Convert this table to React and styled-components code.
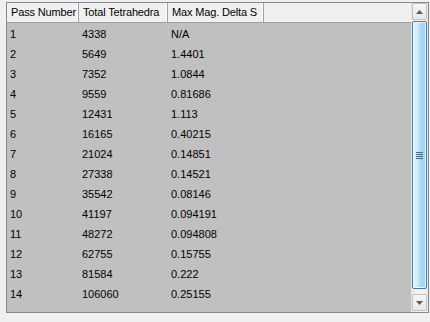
import React from 'react';
import styled, { createGlobalStyle } from 'styled-components';

const GlobalStyle = createGlobalStyle`
  html, body {
    margin: 0;
    padding: 0;
    background: #f0f0f0;
  }
  body {
    font-family: "Liberation Sans", Arial, sans-serif;
    font-size: 11px;
    color: #000;
  }
`;

const Page = styled.div`
  width: 430px;
  height: 322px;
  padding: 2px 1px 0 6px;
  box-sizing: border-box;
  background: #f0f0f0;
`;

const ListBox = styled.div`
  display: flex;
  height: 311px;
  border: 1px solid #828790;
  background: #c0c0c0;
  box-sizing: border-box;
`;

const Body = styled.div`
  flex: 1;
  display: flex;
  flex-direction: column;
  overflow: hidden;
`;

const Header = styled.div`
  display: flex;
  height: 20px;
  flex: none;
  background: #f0f0f0;
  border-bottom: 1px solid #a0a0a0;
  box-sizing: border-box;
`;

const HeaderCell = styled.div`
  width: ${(p) => p.$w}px;
  flex: ${(p) => (p.$fill ? 1 : 'none')};
  padding-left: 4px;
  line-height: 19px;
  letter-spacing: -0.15px;
  white-space: nowrap;
  overflow: hidden;
  border-right: 1px solid #a0a0a0;
  box-shadow: inset -1px 0 0 #fff;
  box-sizing: border-box;
  &:last-child {
    border-right: none;
    box-shadow: none;
  }
`;

const Rows = styled.div`
  display: flex;
  flex-direction: column;
  padding-top: 1px;
`;

const Row = styled.div`
  display: flex;
  height: 20px;
  flex: none;
  align-items: center;
`;

const Cell = styled.div`
  width: ${(p) => p.$w}px;
  padding-left: 3px;
  white-space: nowrap;
  box-sizing: border-box;
`;

const ScrollBar = styled.div`
  width: 17px;
  flex: none;
  display: flex;
  flex-direction: column;
  background: linear-gradient(to right, #e3e3e3, #f3f3f3 30%, #f3f3f3 70%, #e6e6e6);
  padding: 0 0 1px 0;
  box-sizing: border-box;
`;

const ArrowButton = styled.div`
  height: 17px;
  flex: none;
  margin: 0 1px;
  border: 1px solid #c2c2c2;
  border-radius: 2px;
  background: linear-gradient(#f6f6f6, #e8e8e8);
  display: flex;
  align-items: center;
  justify-content: center;
  box-sizing: border-box;
`;

const Track = styled.div`
  flex: 1;
  display: flex;
  flex-direction: column;
  padding: 1px 0 ${(p) => p.$bottom}px;
`;

const Thumb = styled.div`
  flex: 1;
  margin: 0 1px;
  border: 1px solid #3c7fb1;
  border-radius: 2px;
  background: linear-gradient(to right, #e3f4fc, #c6e8f9 45%, #a9d9f2 55%, #a2d5f0);
  box-shadow: inset 0 0 0 1px rgba(255, 255, 255, 0.7);
  display: flex;
  align-items: center;
  justify-content: center;
`;

const Arrow = ({ up }) => (
  <svg width="7" height="4" viewBox="0 0 7 4">
    <path d={up ? 'M0 4 L3.5 0 L7 4 Z' : 'M0 0 L3.5 4 L7 0 Z'} fill="#5a5a5a" />
  </svg>
);

const Grip = () => (
  <svg width="7" height="7" viewBox="0 0 7 7">
    {[0, 2, 4, 6].map((y) => (
      <rect key={y} x="0" y={y} width="7" height="1" fill="#3e6b8a" />
    ))}
  </svg>
);

const columns = [
  { label: 'Pass Number', w: 72 },
  { label: 'Total Tetrahedra', w: 89 },
  { label: 'Max Mag. Delta S', w: 96 },
];

const rows = [
  ['1', '4338', 'N/A'],
  ['2', '5649', '1.4401'],
  ['3', '7352', '1.0844'],
  ['4', '9559', '0.81686'],
  ['5', '12431', '1.113'],
  ['6', '16165', '0.40215'],
  ['7', '21024', '0.14851'],
  ['8', '27338', '0.14521'],
  ['9', '35542', '0.08146'],
  ['10', '41197', '0.094191'],
  ['11', '48272', '0.094808'],
  ['12', '62755', '0.15755'],
  ['13', '81584', '0.222'],
  ['14', '106060', '0.25155'],
];

const App = () => {
  return (
    <Page>
      <GlobalStyle />
      <ListBox>
        <Body>
          <Header>
            {columns.map((c) => (
              <HeaderCell key={c.label} $w={c.w}>
                {c.label}
              </HeaderCell>
            ))}
            <HeaderCell $fill />
          </Header>
          <Rows>
            {rows.map((r) => (
              <Row key={r[0]}>
                {r.map((v, i) => (
                  <Cell key={i} $w={columns[i].w}>
                    {v}
                  </Cell>
                ))}
              </Row>
            ))}
          </Rows>
        </Body>
        <ScrollBar>
          <ArrowButton>
            <Arrow up />
          </ArrowButton>
          <Track $bottom={5}>
            <Thumb>
              <Grip />
            </Thumb>
          </Track>
          <ArrowButton>
            <Arrow />
          </ArrowButton>
        </ScrollBar>
      </ListBox>
    </Page>
  );
};

export default App;
